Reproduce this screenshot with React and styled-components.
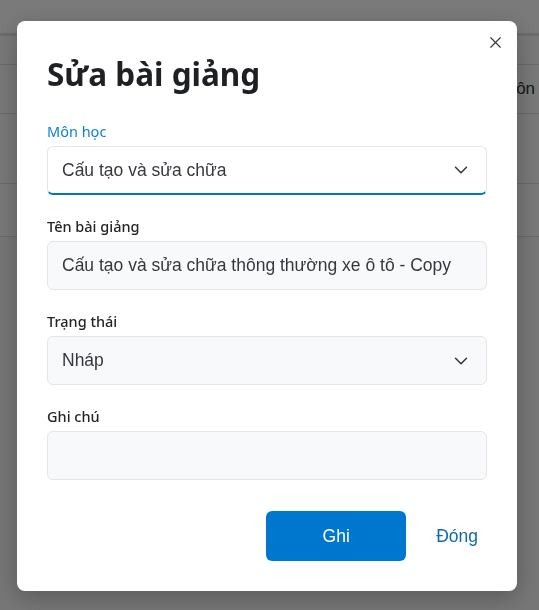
import React from 'react';
import styled, { createGlobalStyle } from 'styled-components';
import { ChevronDown, X } from 'lucide-react';

const GlobalStyle = createGlobalStyle`
  html, body {
    margin: 0;
    padding: 0;
    background: #f6f6f6;
    font-family: "Noto Sans", "Open Sans", sans-serif;
  }
  * { box-sizing: border-box; }
`;

const Page = styled.div`
  height: 610px;
  overflow: hidden;
`;

const TopBar = styled.div`
  height: 36px;
  background: #ffffff;
  border-bottom: 3px solid #e2e2e2;
`;

const TableRow = styled.div`
  height: ${({ $h }) => $h}px;
  display: flex;
  align-items: center;
  justify-content: flex-end;
  border-bottom: 1px solid #dcdcdc;
  background: #fafafa;
  font-family: "Liberation Sans", Arial, sans-serif;
  font-size: 17px;
  color: #333;
`;

const HeaderCell = styled.span`
  width: 37px;
  white-space: nowrap;
`;

const Backdrop = styled.div`
  position: fixed;
  inset: 0;
  background: rgba(0, 0, 0, 0.52);
`;

const Dialog = styled.div`
  position: relative;
  width: 500px;
  margin: 21px 0 0 17px;
  background: #fff;
  border-radius: 8px;
  padding: 31px 30px 30px;
  box-shadow: 0 6px 24px rgba(0, 0, 0, 0.25);
`;

const CloseButton = styled.button`
  position: absolute;
  top: 6px;
  right: 7px;
  width: 30px;
  height: 30px;
  border: none;
  background: transparent;
  color: #333;
  display: flex;
  align-items: center;
  justify-content: center;
  padding: 0;
`;

const Title = styled.h1`
  margin: 0 0 25px;
  font-size: 31.5px;
  line-height: 44px;
  font-weight: 700;
  color: #1f2024;
`;

const Form = styled.div`
  display: flex;
  flex-direction: column;
  gap: 21px;
`;

const Group = styled.div`
  display: flex;
  flex-direction: column;
  gap: 5px;
`;

const Label = styled.label`
  font-size: 14.5px;
  line-height: 20px;
  font-weight: ${({ $active }) => ($active ? 400 : 500)};
  color: ${({ $active }) => ($active ? '#0a7fd6' : '#242424')};
`;

const Field = styled.div`
  height: 49px;
  display: flex;
  align-items: center;
  justify-content: space-between;
  padding: 0 14px;
  border: 1px solid #e3e5e9;
  border-radius: 6px;
  background: ${({ $active }) => ($active ? '#ffffff' : '#f8f9fb')};
  ${({ $active }) => $active && 'border-bottom: 2px solid #0074c8;'}
  font-family: "Liberation Sans", Arial, sans-serif;
  font-size: 17.5px;
  color: #36383d;
`;

const Footer = styled.div`
  display: flex;
  justify-content: flex-end;
  align-items: center;
  gap: 30px;
  margin-top: 31px;
  padding-right: 9px;
`;

const PrimaryButton = styled.button`
  width: 140px;
  height: 50px;
  border: none;
  border-radius: 6px;
  background: #0077cf;
  color: #fff;
  font-family: "Liberation Sans", Arial, sans-serif;
  font-size: 17.5px;
  font-weight: 500;
`;

const LinkButton = styled.button`
  border: none;
  background: transparent;
  padding: 0;
  color: #1068b3;
  font-family: "Liberation Sans", Arial, sans-serif;
  font-size: 17.5px;
`;

export default function App() {
  return (
    <>
      <GlobalStyle />
      <Page>
        <TopBar />
        <TableRow $h={29} />
        <TableRow $h={49}>
          <HeaderCell>Môn</HeaderCell>
        </TableRow>
        <TableRow $h={70} />
        <TableRow $h={53} />
      </Page>
      <Backdrop>
        <Dialog>
          <CloseButton aria-label="Đóng">
            <X size={19} strokeWidth={1.4} />
          </CloseButton>
          <Title>Sửa bài giảng</Title>
          <Form>
            <Group>
              <Label $active>Môn học</Label>
              <Field $active>
                Cấu tạo và sửa chữa
                <ChevronDown size={22} strokeWidth={1.6} color="#333" />
              </Field>
            </Group>
            <Group>
              <Label>Tên bài giảng</Label>
              <Field>Cấu tạo và sửa chữa thông thường xe ô tô - Copy</Field>
            </Group>
            <Group>
              <Label>Trạng thái</Label>
              <Field>
                Nháp
                <ChevronDown size={22} strokeWidth={1.6} color="#333" />
              </Field>
            </Group>
            <Group>
              <Label>Ghi chú</Label>
              <Field />
            </Group>
          </Form>
          <Footer>
            <PrimaryButton>Ghi</PrimaryButton>
            <LinkButton>Đóng</LinkButton>
          </Footer>
        </Dialog>
      </Backdrop>
    </>
  );
}
